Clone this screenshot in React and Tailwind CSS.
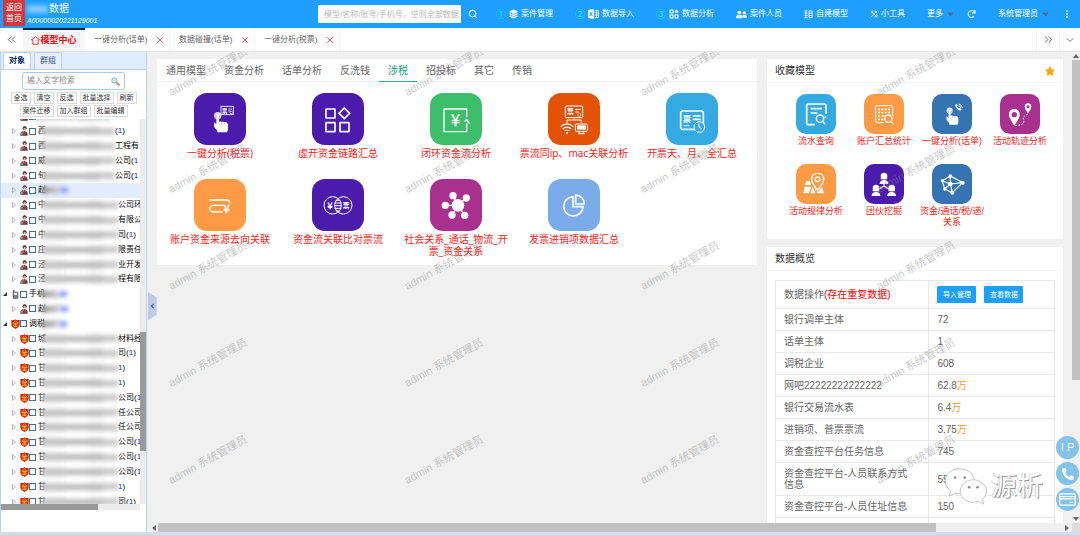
import React from "react";
import {
  ChevronsLeft,
  ChevronsRight,
  ChevronDown,
  X,
  Search,
  EllipsisVertical,
} from "lucide-react";
import {
  FaLayerGroup,
  FaUserFriends,
  FaStar,
  FaRedo,
  FaPhoneAlt,
  FaCaretDown,
} from "react-icons/fa";

/* ---------- small icons ---------- */

function HomeIcon() {
  return (
    <svg viewBox="0 0 24 24" className="h-[9px] w-[9px]" fill="none" stroke="currentColor" strokeWidth="2">
      <path d="M12 2 L23 10 L19 10 V22 H5 V10 H1 Z" />
    </svg>
  );
}

function SheetIcon() {
  return (
    <svg viewBox="0 0 22 20" className="h-[10px] w-[11px]" fill="currentColor">
      <path d="M0 2 L12 0 V20 L0 18 Z M3 6 L5.2 10 L3 14 H5 L6.3 11.6 L7.6 14 H9.6 L7.3 10 L9.6 6 H7.6 L6.3 8.4 L5 6 Z" fillRule="evenodd" />
      <path d="M13 3 H21 V17 H13 M13 7.5 H21 M13 12 H21 M17 3 V17" fill="none" stroke="currentColor" strokeWidth="1.6" />
    </svg>
  );
}

function AnalysisIcon() {
  return (
    <svg viewBox="0 0 20 20" className="h-[10px] w-[10px]" fill="none" stroke="currentColor" strokeWidth="2">
      <rect x="2" y="2" width="6" height="6" />
      <rect x="2" y="12" width="6" height="6" />
      <rect x="12" y="12" width="6" height="6" />
      <path d="M15 1 L19 5 L15 9 L11 5 Z" fill="currentColor" stroke="none" />
    </svg>
  );
}

function BuildIcon() {
  return (
    <svg viewBox="0 0 20 20" className="h-[9px] w-[9px]" fill="none" stroke="currentColor" strokeWidth="1.8">
      <path d="M1 2 H8 M1 7 H8 M1 12 H8 M1 17 H8 M4 2 V17 M11 2 H18 V17 H11 Z M11 7 H18 M11 12 H18" />
    </svg>
  );
}

function ToolsIcon() {
  return (
    <svg viewBox="0 0 20 20" className="h-2 w-2" fill="none" stroke="currentColor" strokeWidth="2">
      <path d="M2 18 L18 2 M2 2 L18 18 M11 17 H17 V11 M2 8 L8 2 M12 2 L18 8" />
    </svg>
  );
}

function GlassIcon() {
  return (
    <svg viewBox="0 0 24 24" className="h-[9px] w-[9px] shrink-0" fill="none">
      <path d="M14 14 L21 21" stroke="#c08a50" strokeWidth="5" strokeLinecap="round" />
      <circle cx="9" cy="9" r="7" fill="#d6e9fb" stroke="#7fb0e0" strokeWidth="2.6" />
    </svg>
  );
}

function PersonIcon() {
  return (
    <svg viewBox="0 0 24 30" className="h-[10px] w-2 shrink-0">
      <circle cx="14" cy="7" r="6" fill="#3b2a22" />
      <circle cx="14" cy="9" r="3.6" fill="#e9b995" />
      <path d="M1 29 Q1 15 13 15 Q23 15 23 29 Z" fill="#3d4045" />
      <path d="M9 15 L13 27 L18 15 Z" fill="#f3f3f3" />
      <path d="M11 15 H16 L17 25 L13 29 L10 25 Z" fill="#d02a1e" />
      <circle cx="5" cy="23" r="4.4" fill="#8b8f94" />
    </svg>
  );
}

function ShieldIcon() {
  return (
    <svg viewBox="0 0 24 26" className="h-[10px] w-[9px] shrink-0">
      <path d="M12 0 L15 2 H23 V15 Q22 22 12 26 Q2 22 1 15 V2 H9 Z" fill="#dc1f10" />
      <path d="M12 4 L5 11 H19 Z M7 13 H17 M12 11 V20 M7 20 H17 M8 15 V20 M16 15 V20" fill="none" stroke="#ffd21c" strokeWidth="2" />
    </svg>
  );
}

function MobileIcon() {
  return (
    <svg viewBox="0 0 20 26" className="h-[9px] w-[9px] shrink-0">
      <rect x="2" y="5" width="16" height="20" rx="2" fill="#5e6266" />
      <rect x="3" y="0" width="4" height="6" fill="#5e6266" />
      <rect x="5" y="8" width="10" height="6" fill="#f4f4f4" />
      <path d="M6 17 H14 M6 21 H14" stroke="#e0e0e0" strokeWidth="2" strokeDasharray="2 1" />
    </svg>
  );
}

function TreeArrow({ open }) {
  return (
    <svg viewBox="0 0 12 12" className="h-[6px] w-[6px] shrink-0">
      {open ? (
        <path d="M10 2 V10 H2 Z" fill="#333" />
      ) : (
        <path d="M3 1 L9 6 L3 11 Z" fill="none" stroke="#999" strokeWidth="1.4" />
      )}
    </svg>
  );
}

/* ---------- model glyphs: 156 unit box ---------- */

function Hand({ x, y }) {
  return (
    <g transform={`translate(${x} ${y})`}>
      <circle cx="13" cy="12" r="11" fill="#fff" fillOpacity="0.85" stroke="none" />
      <path
        d="M9 14 Q9 10 13 10 Q17 10 17 14 V30 Q21 27 24 31 Q29 28 32 32 Q38 29 42 34 L44 40 V54 L41 62 H13 L10 54 L2 46 V32 L9 37 Z"
        fill="#fff"
        stroke="none"
      />
      <path d="M8 12 V30 M18 12 V30" stroke="#5b35b5" strokeOpacity="0.6" strokeWidth="1.6" />
      <path d="M24 31 V38 M32 32 V38" stroke="#5b35b5" strokeOpacity="0.6" strokeWidth="1.6" />
    </g>
  );
}

function Magnifier({ x, y, bg }) {
  return (
    <g strokeWidth="4">
      <circle cx={x} cy={y} r="11" fill={bg} />
      <path d={`M${x + 8} ${y + 8} l8 9`} />
    </g>
  );
}

const svgText = "font-['Noto_Sans_CJK_SC',sans-serif] font-bold";
const svgYen = "font-['Noto_Sans_CJK_SC',sans-serif]";

const glyphs = {
  touchInvoice: (
    <>
      <Hand x={58} y={56} />
      <rect x="81" y="40" width="37" height="25" strokeWidth="2.5" />
      <text x="84" y="59" fontSize="16" fill="#fff" stroke="none" className={svgText}>票</text>
      <path d="M103 48 H114 M103 54 H110" strokeWidth="2.5" />
      <circle cx="112" cy="59" r="4" strokeWidth="2" />
    </>
  ),
  blocks: (
    <g strokeWidth="5">
      <rect x="42" y="48" width="27" height="27" rx="1" />
      <path d="M97 45 L113 61 L97 77 L81 61 Z" />
      <rect x="42" y="89" width="27" height="27" rx="1" />
      <rect x="84" y="89" width="27" height="27" rx="1" />
    </g>
  ),
  loopYen: (
    <>
      <path d="M110 72 V48 H42 V116 H110 V90" strokeWidth="4" />
      <path d="M104 86 L110 80 L118 92" strokeWidth="4" />
      <text x="76" y="99" fontSize="48" textAnchor="middle" fill="#fff" stroke="#fff" strokeWidth="1" className={svgYen}>¥</text>
    </>
  ),
  network: (
    <>
      <rect x="52" y="39" width="52" height="35" rx="3" strokeWidth="3" />
      <text x="57" y="64" fontSize="20" fill="#fff" stroke="none" className={svgText}>票</text>
      <path d="M82 49 H98 M82 57 H92" strokeWidth="3" />
      <circle cx="94" cy="66" r="5" strokeWidth="2" />
      <path d="M78 74 V80 M57 90 V81 H100 V90" strokeWidth="3" />
      <path d="M38 101 Q57 84 76 101 M44 108 Q57 97 70 108 M50 114 Q57 108 64 114" strokeWidth="3.5" />
      <circle cx="57" cy="120" r="3" fill="#fff" stroke="none" />
      <rect x="82" y="93" width="36" height="22" rx="2" strokeWidth="3" />
      <rect x="87" y="97" width="26" height="13" fill="#fff" stroke="none" />
      <path d="M93 116 V121 H107 V116 M90 122 H110" strokeWidth="3" />
    </>
  ),
  invoiceClock: (
    <>
      <rect x="44" y="54" width="68" height="55" rx="6" strokeWidth="5" />
      <text x="50" y="86" fontSize="25" fill="#fff" stroke="none" className={svgText}>票</text>
      <path d="M80 69 H104 M80 79 H104" strokeWidth="5" />
      <path d="M53 98 H72" strokeWidth="3" />
      <circle cx="100" cy="102" r="16" fill="#35aae2" strokeWidth="3" />
      <path d="M99 92 V103 L107 107" strokeWidth="3" />
    </>
  ),
  pathYen: (
    <>
      <path d="M46 63 H96 Q107 63 108 74 M92 79 H58 Q48 80 48 89 Q48 98 58 99 H86" strokeWidth="4" />
      <text x="98" y="101" fontSize="33" textAnchor="middle" fill="#fff" stroke="#fff" strokeWidth="1" className={svgYen}>¥</text>
    </>
  ),
  venn: (
    <>
      <circle cx="62" cy="79" r="26" strokeWidth="3" />
      <circle cx="94" cy="79" r="26" strokeWidth="3" />
      <path d="M71 64 H85 M68 72 H88 M67 80 H89 M68 88 H88 M71 96 H85" strokeWidth="3" />
      <text x="54" y="89" fontSize="27" textAnchor="middle" fill="#fff" stroke="#fff" strokeWidth="1" className={svgYen}>¥</text>
      <text x="102" y="86" fontSize="20" textAnchor="middle" fill="#fff" stroke="none" className={svgText}>票</text>
    </>
  ),
  hub: (
    <>
      <path d="M84 79 L69 50 M84 79 L109 57 M84 79 L46 79 M84 79 L66 108 M84 79 L104 109" strokeWidth="4" />
      <g fill="#fff" stroke="none">
        <circle cx="84" cy="79" r="19" />
        <circle cx="69" cy="50" r="11" />
        <circle cx="109" cy="57" r="11" />
        <circle cx="46" cy="79" r="11" />
        <circle cx="66" cy="108" r="11" />
        <circle cx="104" cy="109" r="11" />
      </g>
    </>
  ),
  pie: (
    <g strokeWidth="5" strokeLinejoin="round">
      <path d="M75 53 A29 29 0 1 0 105 83 H75 Z" />
      <path d="M83 48 A27 27 0 0 1 109 75 H83 Z" />
    </g>
  ),
};

/* ---------- favourite glyphs: 120 unit box ---------- */

const favGlyphs = {
  docSearch: (
    <>
      <path d="M90 60 V36 Q90 30 84 30 H38 Q32 30 32 36 V86 Q32 92 38 92 H56" strokeWidth="5" />
      <path d="M44 44 H78 M44 57 H64" strokeWidth="5" />
      <Magnifier x={72} y={74} bg="#35aae2" />
      <circle cx="88" cy="70" r="3" fill="#fff" stroke="none" />
    </>
  ),
  gridSearch: (
    <>
      <path d="M86 66 V40 Q86 35 81 35 H40 Q35 35 35 40 V81 Q35 86 40 86 H60" strokeWidth="3" />
      <path d="M42 46 H80 M42 56 H80 M42 66 H66 M42 76 H60" strokeWidth="5" strokeDasharray="6 4" />
      <Magnifier x={73} y={74} bg="#ff9a45" />
    </>
  ),
  touchPhone: (
    <>
      <g transform="translate(42 40) scale(0.84)">
        <Hand x={0} y={0} />
      </g>
      <path d="M70 32 Q70 46 86 50 L89 45 L83 41 L80 43 Q76 40 75 37 L77 34 L73 29 Z" fill="#fff" stroke="none" />
      <path d="M80 30 Q90 32 91 42 M80 35 Q86 36 86 41" strokeWidth="2.5" />
    </>
  ),
  pinsRoute: (
    <>
      <path d="M43 95 Q30 76 27 66 Q25 45 43 45 Q61 45 59 66 Q56 76 43 95 Z M43 54 A8 8 0 1 0 43 70 A8 8 0 1 0 43 54 Z" fill="#fff" fillRule="evenodd" stroke="none" />
      <path d="M84 58 Q75 46 74 39 Q74 28 84 28 Q94 28 94 39 Q93 46 84 58 Z M84 34 A4 4 0 1 0 84 43 A4 4 0 1 0 84 34 Z" fill="#fff" fillRule="evenodd" stroke="none" />
      <path d="M84 60 Q68 66 71 76 Q74 90 60 93 L46 94" strokeWidth="3" strokeDasharray="5 4" />
    </>
  ),
  mapPin: (
    <>
      <path d="M30 51 H42 L45 64 H27 Z M26 68 H46 L38 88 H22 Z M50 70 L58 88 H43 Z M48 52 L58 80 L66 84 L78 70 L84 88 H64 Z" fill="#fff" stroke="none" />
      <path d="M65 78 Q47 58 47 46 Q47 28 65 28 Q83 28 83 46 Q83 58 65 78 Z" fill="#ff9a45" strokeWidth="4" />
      <circle cx="65" cy="46" r="7" strokeWidth="4" />
    </>
  ),
  team: (
    <>
      <path d="M60 56 V68 M60 66 L47 74 M60 66 L73 74" strokeWidth="4" />
      {[
        [60, 36],
        [36, 72],
        [83, 72],
      ].map(([x, y]) => (
        <g key={x} fill="#fff" stroke="none">
          <circle cx={x} cy={y} r="10" />
          <path d={`M${x - 9} ${y} L${x - 10} ${y + 10} H${x + 10} L${x + 9} ${y} Z`} />
          <path d={`M${x - 13} ${y + 24} Q${x - 13} ${y + 12} ${x} ${y + 11} Q${x + 13} ${y + 12} ${x + 13} ${y + 24} Z`} />
        </g>
      ))}
    </>
  ),
  mesh: (
    <>
      <path
        d="M55 36 L31 50 L38 75 L61 86 L92 56 Z M55 36 L55 60 L31 50 M55 60 L38 75 M55 60 L61 86 M55 60 L92 56"
        strokeWidth="3.5"
      />
      <g fill="#fff" stroke="none">
        <circle cx="55" cy="60" r="7" />
        <circle cx="55" cy="36" r="5" />
        <circle cx="31" cy="50" r="5" />
        <circle cx="92" cy="56" r="6" />
        <circle cx="38" cy="75" r="5" />
        <circle cx="61" cy="86" r="6" />
      </g>
    </>
  ),
};

/* ---------- data ---------- */

const models = [
  { name: "一键分析(税票)", bg: "bg-[#4b1cab]", glyph: "touchInvoice" },
  { name: "虚开资金链路汇总", bg: "bg-[#4b1cab]", glyph: "blocks" },
  { name: "闭环资金流分析", bg: "bg-[#3ebd6b]", glyph: "loopYen" },
  { name: "票流同ip、mac关联分析", bg: "bg-[#e35205]", glyph: "network" },
  { name: "开票天、月、全汇总", bg: "bg-[#35aae2]", glyph: "invoiceClock" },
  { name: "账户资金来源去向关联", bg: "bg-[#ff9a45]", glyph: "pathYen" },
  { name: "资金流关联比对票流", bg: "bg-[#4b1cab]", glyph: "venn" },
  { name: "社会关系_通话_物流_开票_资金关系", bg: "bg-[#a8318f]", glyph: "hub" },
  { name: "发票进销项数据汇总", bg: "bg-[#7bace9]", glyph: "pie" },
];

const favourites = [
  { name: ["流水查询"], bg: "bg-[#35aae2]", glyph: "docSearch" },
  { name: ["账户汇总统计"], bg: "bg-[#ff9a45]", glyph: "gridSearch" },
  { name: ["一键分析(话单)"], bg: "bg-[#3573b1]", glyph: "touchPhone" },
  { name: ["活动轨迹分析"], bg: "bg-[#a8318f]", glyph: "pinsRoute" },
  { name: ["活动规律分析"], bg: "bg-[#ff9a45]", glyph: "mapPin" },
  { name: ["团伙挖掘"], bg: "bg-[#4b1cab]", glyph: "team" },
  { name: ["资金/通话/税/递/", "关系"], bg: "bg-[#3573b1]", glyph: "mesh" },
];

const overview = [
  ["银行调单主体", "72"],
  ["话单主体", "1"],
  ["调税企业", "608"],
  ["网吧22222222222222", "62.8", "万"],
  ["银行交易流水表", "6.4", "万"],
  ["进销项、普票票流", "3.75", "万"],
  ["资金查控平台任务信息", "745"],
  ["资金查控平台-人员联系方式信息", "552"],
  ["资金查控平台-人员住址信息", "150"],
  ["", ""],
];

const wide = "w-[76px]";
const mid = "w-[73px]";
const short = "w-[18px]";
const tree = [
  { kind: "person", head: "", mask: wide },
  { kind: "person", head: "西", mask: mid, tail: "(", count: "1", end: ")" },
  { kind: "person", head: "西", mask: mid, tail: "工程有" },
  { kind: "person", head: "威", mask: mid, tail: "公司(", count: "1" },
  { kind: "person", head: "旬", mask: mid, tail: "公司(", count: "1" },
  { kind: "person", head: "赵", mask: short, blue: true, selected: true },
  { kind: "person", head: "中", mask: wide, tail: "公司环" },
  { kind: "person", head: "中", mask: wide, tail: "有限公" },
  { kind: "person", head: "中", mask: wide, tail: "司(", count: "1", end: ")" },
  { kind: "person", head: "庄", mask: wide, tail: "限责任" },
  { kind: "person", head: "泾", mask: wide, tail: "业开发" },
  { kind: "person", head: "泾", mask: wide, tail: "程有限" },
  { kind: "mobile", head: "手机", mask: short, blue: true, root: true },
  { kind: "person", head: "赵", mask: short, blue: true },
  { kind: "shield", head: "调税", mask: short, blue: true, root: true },
  { kind: "shield", head: "城", mask: wide, tail: "材料经" },
  { kind: "shield", head: "甘", mask: wide, tail: "司(", count: "1", end: ")" },
  { kind: "shield", head: "甘", mask: wide, count: "1", end: ")" },
  { kind: "shield", head: "甘", mask: wide, count: "1", end: ")" },
  { kind: "shield", head: "甘", mask: wide, tail: "公司(", count: "1" },
  { kind: "shield", head: "甘", mask: wide, tail: "任公司" },
  { kind: "shield", head: "甘", mask: wide, tail: "任公司" },
  { kind: "shield", head: "甘", mask: wide, tail: "公司(", count: "1" },
  { kind: "shield", head: "甘", mask: wide, tail: "公司(", count: "1" },
  { kind: "shield", head: "甘", mask: wide, tail: "公司(", count: "1" },
  { kind: "shield", head: "甘", mask: wide, count: "1", end: ")" },
  { kind: "shield", head: "甘", mask: wide, tail: "司(", count: "1", end: ")" },
];

/* ---------- header ---------- */

function NavItem({ no, icon, children, caret }) {
  return (
    <a href="#" className="flex items-center gap-[3px] whitespace-nowrap">
      {no && <span className="text-[10px] text-[#00f0ff]">{no}</span>}
      {icon}
      <span>{children}</span>
      {caret && <FaCaretDown className="h-[10px] w-[9px] text-[#4a6a8a]" />}
    </a>
  );
}

function Header() {
  return (
    <header className="flex h-7 shrink-0 items-center bg-[#1e9fff] pl-[3px] pr-2 text-[8px] text-white">
      <a href="#" className="flex h-[26px] w-[22px] flex-col items-center justify-center self-start bg-[#d03a3f] leading-[11px]">
        <span>返回</span>
        <span>首页</span>
      </a>
      <div className="ml-[2px] flex flex-col">
        <h1 className="flex h-[13px] items-center text-[10px] leading-3">
          <span className="mr-px h-2 w-[21px] bg-white/45 blur-[2px]" />
          数据
        </h1>
        <span className="h-[10px] text-[7px] italic leading-[10px]">A00000020221129001</span>
      </div>
      <div className="ml-auto flex items-center">
        <input
          type="text"
          aria-label="搜索模型"
          placeholder="模型/名称/账号/手机号，空则全部数据"
          className="h-[18px] w-[143px] rounded-[1px] bg-white pl-[6px] text-[8px] text-gray-700 outline-none placeholder:text-[#b9b9b9]"
        />
        <button type="button" aria-label="搜索" className="ml-[7px]">
          <Search className="h-[10px] w-[10px]" strokeWidth={2.4} />
        </button>
      </div>
      <nav className="ml-[18px] flex items-center gap-[22px]">
        <NavItem no="①" icon={<FaLayerGroup className="h-[10px] w-[9px]" />}>案件管理</NavItem>
        <NavItem no="②" icon={<SheetIcon />}>数据导入</NavItem>
        <NavItem no="③" icon={<AnalysisIcon />}>数据分析</NavItem>
        <NavItem icon={<FaUserFriends className="h-[11px] w-[11px]" />}>案件人员</NavItem>
        <NavItem icon={<BuildIcon />}>自建模型</NavItem>
        <NavItem icon={<ToolsIcon />}>小工具</NavItem>
        <NavItem caret>更多</NavItem>
      </nav>
      <button type="button" aria-label="刷新" className="ml-3">
        <FaRedo className="h-2 w-[9px]" />
      </button>
      <div className="ml-[22px]">
        <NavItem caret>系统管理员</NavItem>
      </div>
      <button type="button" aria-label="更多操作" className="ml-3">
        <EllipsisVertical className="h-[10px] w-[10px]" strokeWidth={2.5} />
      </button>
    </header>
  );
}

function PageTabs() {
  return (
    <div className="flex h-6 shrink-0 items-stretch border-b border-[#e4e4e4] bg-white text-[8px] text-[#666]">
      <button type="button" aria-label="向左" className="flex w-[23px] items-center justify-center">
        <ChevronsLeft className="h-[13px] w-[13px]" strokeWidth={1.8} />
      </button>
      <a href="#" className="flex w-[62px] items-center justify-center border-t-2 border-[#10253f] bg-[#f6f6f6] text-[9px] font-bold text-[#ff0000]">
        <HomeIcon />
        模型中心
      </a>
      {["一键分析(话单)", "数据碰撞(话单)", "一键分析(税票)"].map((t) => (
        <div key={t} className="flex w-[85px] items-center justify-between border-r border-[#f4f4f4] pl-[9px] pr-1">
          <a href="#" className="whitespace-nowrap">{t}</a>
          <button type="button" aria-label={`关闭${t}`} className="text-[#ff5050]">
            <X className="h-[10px] w-[10px]" strokeWidth={2.4} />
          </button>
        </div>
      ))}
      <button type="button" aria-label="向右" className="ml-auto flex w-[23px] items-center justify-center border-l border-[#f4f4f4]">
        <ChevronsRight className="h-[13px] w-[13px]" strokeWidth={1.8} />
      </button>
      <button type="button" aria-label="展开" className="flex w-[21px] items-center justify-center border-l border-[#f4f4f4]">
        <ChevronDown className="h-3 w-3" strokeWidth={1.8} />
      </button>
    </div>
  );
}

/* ---------- sidebar ---------- */

function Mask({ width, blue }) {
  return (
    <span className={`relative -ml-1 flex h-[9px] shrink-0 items-center blur-[2px] ${width}`}>
      <span className={`h-[8px] w-[30%] ${blue ? "bg-[#9b9b9b]" : "bg-[#c6c6c6]"}`} />
      <span className={`h-[6px] w-[30%] ${blue ? "bg-[#aaa]" : "bg-[#bdbdbd]"}`} />
      <span className="h-[8px] w-[20%] bg-[#c2c2c2]" />
      <span className="h-[7px] w-[20%] bg-[#cbcbcb]" />
    </span>
  );
}

function TreeRow({ item }) {
  return (
    <li className={`flex min-h-0 flex-1 items-center ${item.selected ? "bg-[#e4edfe]" : ""}`}>
      <label className={`flex items-center whitespace-nowrap ${item.root ? "pl-px" : "pl-[10px]"}`}>
        <TreeArrow open={item.root} />
        <span className="ml-[2px] flex w-[10px] justify-center">
          {item.kind === "person" && <PersonIcon />}
          {item.kind === "shield" && <ShieldIcon />}
          {item.kind === "mobile" && <MobileIcon />}
        </span>
        <input
          type="checkbox"
          className="mr-[2px] h-[7px] w-[7px] shrink-0 appearance-none border border-[#3f6f93] bg-white checked:bg-[#3f6f93]"
        />
        {item.head}
        <Mask width={item.mask} blue={item.blue} />
        {item.blue && <span className="h-[6px] w-2 bg-[#9aa2f5] blur-[2px]" />}
        {item.tail}
        {item.count && <span className="text-[#1414ff]">{item.count}</span>}
        {item.end}
      </label>
    </li>
  );
}

function ToolButton({ children }) {
  return (
    <button type="button" className="h-3 whitespace-nowrap border border-[#dcdcdc] bg-white px-[2px] text-[7px] leading-[10px] text-[#333]">
      {children}
    </button>
  );
}

function Sidebar() {
  return (
    <aside className="flex w-[147px] shrink-0 flex-col border-x border-[#b9d2f3] bg-white text-[8px] text-black">
      <div className="flex h-[18px] shrink-0 items-end gap-[3px] border-b border-[#b9d2f3] bg-[#e0ecff] pl-[2px]">
        <button type="button" className="h-[17px] rounded-t-[3px] border border-b-0 border-[#b9d2f3] bg-white px-[5px] font-bold text-[#0e2d5f]">
          对象
        </button>
        <button type="button" className="h-[17px] rounded-t-[3px] border border-b-0 border-[#b9d2f3] bg-[#e6f0ff] px-[5px] text-[#34507a]">
          群组
        </button>
      </div>
      <div className="mx-[21px] mt-[2px] flex h-[18px] shrink-0 items-center rounded-[3px] border border-[#a9c9f1] bg-white px-1">
        <input
          type="text"
          aria-label="文字检索"
          placeholder="输入文字检索"
          className="w-full min-w-0 bg-transparent outline-none placeholder:text-[#8a8a8a]"
        />
        <GlassIcon />
      </div>
      <div className="mt-[2px] flex shrink-0 justify-center gap-[3px]">
        {["全选", "清空", "反选", "批量选择", "刷新"].map((t) => (
          <ToolButton key={t}>{t}</ToolButton>
        ))}
      </div>
      <div className="mt-px flex shrink-0 justify-center gap-[3px]">
        {["案件迁移", "加入群组", "批量编辑"].map((t) => (
          <ToolButton key={t}>{t}</ToolButton>
        ))}
      </div>
      <div className="mt-[2px] flex min-h-0 flex-1">
        <div className="min-w-0 flex-1 overflow-hidden">
          <ul className="-mt-[10px] flex h-[400px] flex-col">
            {tree.map((item, i) => (
              <TreeRow key={i} item={item} />
            ))}
          </ul>
        </div>
        <div className="flex w-[6px] shrink-0 flex-col bg-[#ededed]">
          <div className="mt-[213px] h-[119px] bg-[#999]" />
        </div>
      </div>
      <div className="mr-[6px] h-[6px] shrink-0 bg-[#ececec]">
        <div className="h-[6px] w-[70%] bg-[#999]" />
      </div>
      <div className="h-[22px] shrink-0" />
    </aside>
  );
}

/* ---------- main ---------- */

function Tile({ bg, size, box, children }) {
  return (
    <span className={`block ${size} ${bg}`}>
      <svg viewBox={box} className="h-full w-full" fill="none" stroke="#fff">
        {children}
      </svg>
    </span>
  );
}

function ModelCard() {
  const cats = ["通用模型", "资金分析", "话单分析", "反洗钱", "涉税", "招投标", "其它", "传销"];
  return (
    <section className="min-w-0 flex-1 bg-white pb-2">
      <div className="flex h-[23px] items-stretch border-b border-[#efefef] text-[10px] text-[#666]">
        {cats.map((c) => (
          <button
            key={c}
            type="button"
            className={
              c === "涉税"
                ? "-mb-px whitespace-nowrap border-b border-[#2fae78] px-[9px] text-[#16a085]"
                : "-mb-px whitespace-nowrap border-b border-transparent px-[9px]"
            }
          >
            {c}
          </button>
        ))}
      </div>
      <div className="grid grid-cols-5 gap-y-5 pl-1 pr-[6px] pt-[11px]">
        {models.map((m) => (
          <a key={m.name} href="#" className="flex flex-col items-center px-1 text-center">
            <Tile bg={m.bg} size="h-[52px] w-[52px] rounded-[13px]" box="0 0 156 156">
              {glyphs[m.glyph]}
            </Tile>
            <span className="mt-[2px] font-['Noto_Sans','Noto_Sans_CJK_SC',sans-serif] text-[10px] leading-3 text-[#ff1a1a]">
              {m.name}
            </span>
          </a>
        ))}
      </div>
    </section>
  );
}

function Favourites() {
  return (
    <section className="bg-white pb-[11px]">
      <div className="flex h-6 items-center justify-between border-b border-[#f6f6f6] px-2 text-[10px] text-[#333]">
        <h2>收藏模型</h2>
        <FaStar className="h-[10px] w-[10px] text-[#ffa500]" />
      </div>
      <div className="grid grid-cols-4 gap-y-[17px] pl-[15px] pr-[9px] pt-[11px]">
        {favourites.map((f) => (
          <a key={f.glyph} href="#" className="flex flex-col items-center">
            <Tile bg={f.bg} size="h-10 w-10 rounded-[10px]" box="0 0 120 120">
              {favGlyphs[f.glyph]}
            </Tile>
            <span className="mt-[2px] flex flex-col items-center whitespace-nowrap font-['Liberation_Sans','Noto_Sans_CJK_SC',sans-serif] text-[9px] leading-[11px] text-[#ff1a1a]">
              {f.name.map((line) => (
                <span key={line}>{line}</span>
              ))}
            </span>
          </a>
        ))}
      </div>
    </section>
  );
}

function Overview() {
  return (
    <section className="min-h-0 flex-1 overflow-hidden bg-white">
      <h2 className="flex h-6 items-center border-b border-[#f6f6f6] px-2 text-[10px] text-[#333]">数据概览</h2>
      <div className="px-2 pt-[9px]">
        <table className="w-full table-fixed border-collapse text-[10px] leading-[11px] text-[#666]">
          <colgroup>
            <col className="w-[55%]" />
            <col />
          </colgroup>
          <tbody>
            <tr>
              <th scope="row" className="border border-[#e8e8e8] px-2 py-[5px] text-left font-normal">
                数据操作<span className="text-[#ff0000]">(存在重复数据)</span>
              </th>
              <td className="border border-[#e8e8e8] px-2 py-[5px]">
                <div className="flex gap-2">
                  {["导入管理", "查看数据"].map((t) => (
                    <button key={t} type="button" className="h-[17px] w-[39px] rounded-[1px] bg-[#1e9fff] text-[7px] text-white">
                      {t}
                    </button>
                  ))}
                </div>
              </td>
            </tr>
            {overview.map(([k, v, unit]) => (
              <tr key={k} className="h-[22px]">
                <th scope="row" className="border border-[#e8e8e8] py-[5px] pl-2 pr-4 text-left font-normal">{k}</th>
                <td className="border border-[#e8e8e8] px-2 py-[5px]">
                  {v}
                  {unit && <span className="text-[#ff9c1a]">{unit}</span>}
                </td>
              </tr>
            ))}
          </tbody>
        </table>
      </div>
    </section>
  );
}

function Watermarks() {
  return (
    <div aria-hidden="true" className="pointer-events-none absolute inset-0 overflow-hidden">
      <div className="-mt-[51px] grid auto-rows-[97px] grid-cols-[repeat(4,236px)]">
        {Array.from({ length: 20 }, (_, i) => (
          <div key={i} className="flex items-end pl-[25px]">
            <span className="origin-bottom-left rotate-[-29deg] whitespace-nowrap font-['Liberation_Sans','Noto_Sans_CJK_SC',sans-serif] text-[11px] leading-3 text-[#888]/45">
              admin 系统管理员
            </span>
          </div>
        ))}
      </div>
    </div>
  );
}

function BrandMark() {
  return (
    <div className="pointer-events-none absolute bottom-[27px] right-[37px] flex items-center gap-1">
      <svg viewBox="0 0 132 114" className="h-[38px] w-[43px]" fill="#fff" stroke="#aaa" strokeWidth="2">
        <path d="M48 4 C22 4 4 20 4 42 C4 54 11 65 20 72 L16 88 L34 79 C39 80 44 81 50 80 C74 80 93 64 93 42 C93 20 74 4 48 4 Z" />
        <path d="M90 38 C66 38 50 54 50 73 C50 92 67 107 90 107 C96 107 101 106 106 104 L122 112 L118 98 C126 92 130 83 130 73 C130 54 113 38 90 38 Z" />
        <g fill="#888" stroke="none">
          <circle cx="34" cy="31" r="4" />
          <circle cx="64" cy="31" r="4" />
          <circle cx="77" cy="61" r="4" />
          <circle cx="103" cy="61" r="4" />
        </g>
      </svg>
      <span className="text-[26px] leading-8 text-white [text-shadow:1px_1px_0_#999,-1px_0_0_#d0d0d0]">源析</span>
    </div>
  );
}

function FloatButtons() {
  const cls = "flex h-[23px] w-[23px] items-center justify-center rounded-full bg-[#82c4e8] text-white";
  return (
    <div className="absolute bottom-[21px] right-px flex flex-col gap-[3px]">
      <button type="button" className={`${cls} text-[11px]`}>I P</button>
      <button type="button" aria-label="电话" className={cls}>
        <FaPhoneAlt className="h-3 w-3" />
      </button>
      <button type="button" aria-label="银行卡" className={cls}>
        <svg viewBox="0 0 24 18" className="h-[13px] w-[17px]" fill="none" stroke="currentColor" strokeWidth="1.8">
          <rect x="1" y="1" width="22" height="16" rx="2" />
          <path d="M1 5 H23 M1 8 H23 M15 13 H20" />
        </svg>
      </button>
    </div>
  );
}

function Arrow({ d }) {
  return (
    <svg viewBox="0 0 8 8" className="h-2 w-2 shrink-0" fill="#666">
      <path d={d} />
    </svg>
  );
}

function Main() {
  return (
    <main className="relative flex min-w-0 flex-1 flex-col bg-[#f0f0f0]">
      <div className="flex min-h-0 flex-1">
        <div className="flex min-w-0 flex-1 items-stretch gap-[10px] pl-[10px] pr-[9px] pt-[7px]">
          <div className="flex min-w-0 flex-1 items-start">
            <ModelCard />
          </div>
          <div className="flex w-[296px] shrink-0 flex-col gap-2">
            <Favourites />
            <Overview />
          </div>
        </div>
        <div className="flex w-2 shrink-0 flex-col justify-between bg-[#f0f0f0]">
          <Arrow d="M4 2 L7 6 H1 Z" />
          <div className="mb-auto h-[68%] bg-[#c1c1c1]" />
          <Arrow d="M1 2 H7 L4 6 Z" />
        </div>
      </div>
      <div className="flex h-[9px] shrink-0 items-center bg-[#f0f0f0] pl-[3px]">
        <Arrow d="M6 1 V7 L2 4 Z" />
        <div className="flex h-full flex-1">
          <div className="h-full w-[86%] bg-[#c1c1c1]" />
        </div>
        <Arrow d="M2 1 V7 L6 4 Z" />
        <div className="ml-px h-full w-2 bg-[#dcdcdc]" />
      </div>
      <Watermarks />
      <button type="button" aria-label="收起侧栏" className="absolute left-px top-[240px] h-7 w-[9px]">
        <svg viewBox="0 0 27 84" className="h-full w-full">
          <path d="M0 0 L26 16 V68 L0 84 Z" fill="#bfcbe6" />
          <path d="M17 36 L10 42 L17 48" fill="none" stroke="#4a5fd0" strokeWidth="4" />
        </svg>
      </button>
      <BrandMark />
      <FloatButtons />
    </main>
  );
}

export default function App() {
  return (
    <div className="flex h-screen flex-col overflow-hidden border-b-[3px] border-[#d3deea] bg-white font-['Liberation_Sans','Noto_Sans_CJK_SC',sans-serif]">
      <Header />
      <PageTabs />
      <div className="flex min-h-0 flex-1">
        <Sidebar />
        <Main />
      </div>
    </div>
  );
}
